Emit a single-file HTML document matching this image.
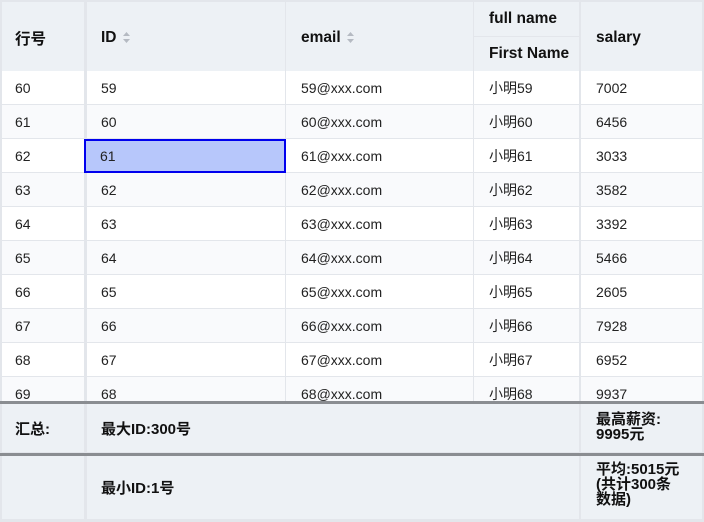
<!DOCTYPE html>
<html><head><meta charset="utf-8"><style>
*{margin:0;padding:0;box-sizing:border-box}
body{width:704px;height:522px;overflow:hidden;background:#fff;font-family:"Liberation Sans","Noto Sans CJK SC",sans-serif;font-size:14px;color:#222;position:relative}
.c{position:absolute;display:flex;align-items:center;padding-left:15px;border-right:1px solid #e3e6eb;border-bottom:1px solid #e3e6eb}
.h{background:#edf1f5;font-weight:bold;font-size:15.5px;color:#111}
.s{background:#edf1f5;font-weight:bold;font-size:15px;color:#111}
.v{position:absolute;top:0;width:2px;height:522px;background:#e3e6eb}
.arr{display:inline-block;margin-left:6px;width:7px;height:11px;vertical-align:middle}
</style></head><body>
<div style="position:absolute;left:0;top:0;width:704px;height:2px;background:#e3e6eb"></div>
<div id="t"></div>
<script>
var cols=[[0,85],[87,199],[286,188],[474,106],[581,123]];
var h='';
function cell(x,y,w,hh,txt,cls,st){h+='<div class="c '+(cls||'')+'" style="left:'+x+'px;top:'+y+'px;width:'+w+'px;height:'+hh+'px;'+(st||'')+'">'+txt+'</div>';}
var arr='<svg class="arr" viewBox="0 0 7 11"><path d="M3.5 0L7 4H0z" fill="#b5bac2"/><path d="M3.5 11L7 7H0z" fill="#b5bac2"/></svg>';
cell(0,2,85,70,'行号','h','padding-top:2px');
cell(87,2,199,70,'ID'+arr,'h','padding-left:14px;padding-top:2px');
cell(286,2,188,70,'email'+arr,'h','padding-left:15px;padding-top:2px');
cell(474,2,106,35,'full name','h');
cell(474,37,106,35,'First Name','h');
cell(581,2,123,70,'salary','h','padding-top:2px');
for(var i=0;i<10;i++){
 var y=71+i*34, bg=i%2?'#f9fafc':'#fff', n=59+i;
 var vals=[n+1,n,n+'@xxx.com','小明'+n,[7002,6456,3033,3582,3392,5466,2605,7928,6952,9937][i]];
 for(var j=0;j<5;j++){
  var st='background:'+bg+';';
  var x=cols[j][0],w=cols[j][1];
  if(j==1) st+='padding-left:14px;';
  if(i==2&&j==1){ st='background:#b7c7fb;border:2px solid #0000ee;padding-left:14px;z-index:2;'; x=84; w=202; }
  cell(x,y,w,34,vals[j],'',st);
 }
}
h+='<div style="position:absolute;left:0;top:401px;width:704px;height:3px;background:#8a8d91;z-index:3"></div>';
cell(0,404,85,49,'汇总:','s');
cell(87,404,493,49,'最大ID:300号','s','padding-left:14px');
cell(581,404,123,49,'<span style="line-height:15px">最高薪资:<br>9995元</span>','s','align-items:flex-start;padding-top:8px');
h+='<div style="position:absolute;left:0;top:453px;width:704px;height:3px;background:#8a8d91;z-index:3"></div>';
cell(0,456,85,64,'','s');
cell(87,456,493,64,'最小ID:1号','s','padding-left:14px');
cell(581,456,123,64,'<span style="line-height:15px">平均:5015元<br>(共计300条<br>数据)</span>','s','align-items:flex-start;padding-top:6px');
h+='<div style="position:absolute;left:0;top:519px;width:704px;height:3px;background:#e3e6eb"></div>';
h+='<div class="v" style="left:85px"></div><div class="v" style="left:579px"></div><div class="v" style="left:0;width:2px"></div><div class="v" style="left:702px"></div>';
document.getElementById('t').innerHTML=h;
</script>
</body></html>
